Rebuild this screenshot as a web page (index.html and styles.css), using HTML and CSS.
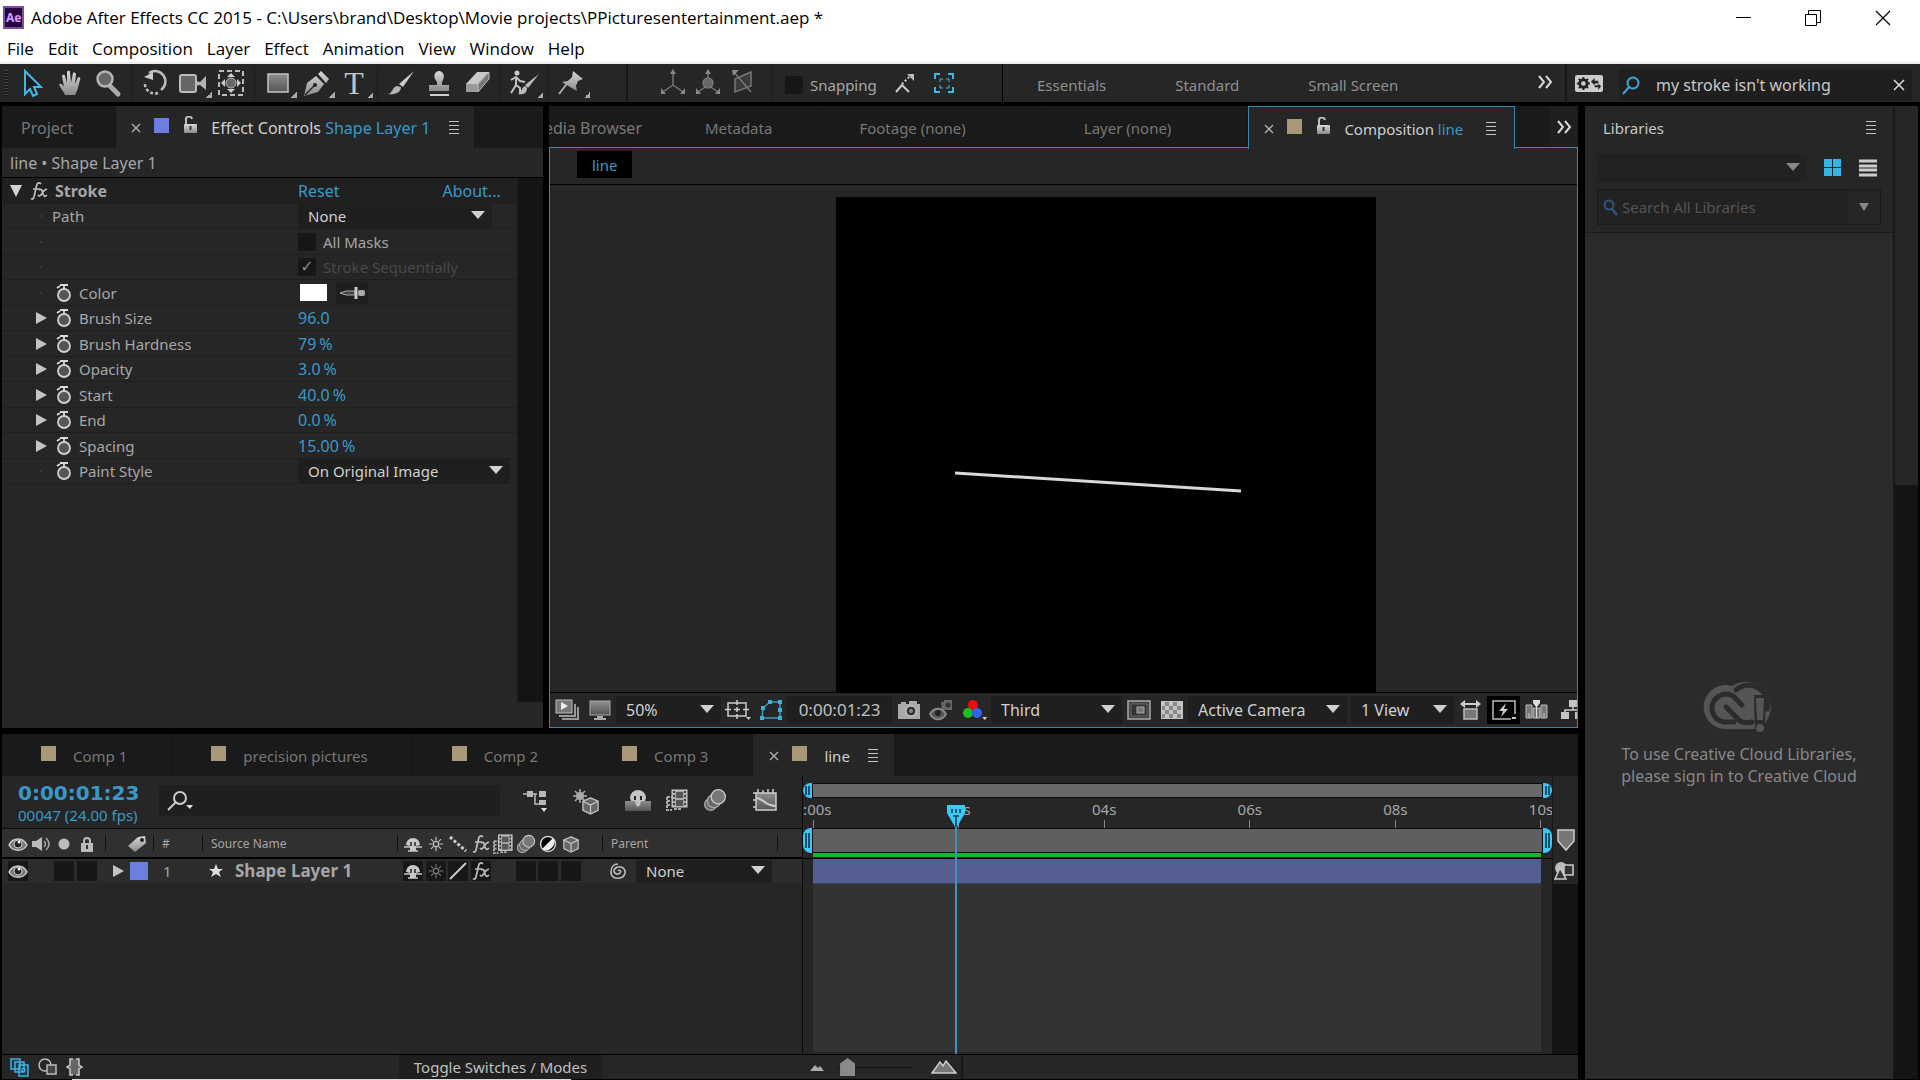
FILE: index.html
```html
<!DOCTYPE html>
<html lang="en">

<head>
  <meta charset="UTF-8" />
  <meta name="viewport" content="width=device-width, initial-scale=1.0" />
  <title>Adobe After Effects CC 2015</title>
  <link rel="stylesheet" href="styles.css">
</head>

<body>
  <!-- Shared icons -->
  <svg class="sprite" width="0" height="0">
    <linearGradient id="metal" x1="0" y1="0" x2="0" y2="1">
      <stop offset="0" stop-color="#d8d8d8" />
      <stop offset="1" stop-color="#8a8a8a" />
    </linearGradient>
    <linearGradient id="steel" x1="0" y1="0" x2="0" y2="1">
      <stop offset="0" stop-color="#8e8e8e" />
      <stop offset="1" stop-color="#555" />
    </linearGradient>
    <symbol id="i-menu" viewBox="0 0 12 13"><path d="M1 .5h10M1 4.500h10M1 8.500h10M1 12.500h10" stroke="#c4c4c4" stroke-width="1" /></symbol>
    <symbol id="i-close" viewBox="0 0 10 10"><path d="M1 1l8 8M9 1l-8 8" stroke="#b4b4b4" stroke-width="1.300" /></symbol>
    <symbol id="i-unlock" viewBox="0 0 16 18"><path d="M4 9V4a3 3 0 0 1 6-1" fill="none" stroke="#c0c0c0" stroke-width="2" /><rect x="2" y="8" width="13" height="9" rx="1" fill="url(#metal)" /><path d="M8.500 10v4" stroke="#333" stroke-width="2" /></symbol>
    <symbol id="i-more" viewBox="0 0 16 14"><path d="M2 1l5 6-5 6M9 1l5 6-5 6" fill="none" stroke="#d8d8d8" stroke-width="2" /></symbol>
    <symbol id="i-watch" viewBox="0 0 18 20"><circle cx="9" cy="12" r="6" fill="#555" stroke="#cfcfcf" stroke-width="1.800" /><path d="M5 2h8M9 2v4M2 5l3-2" stroke="#d8d8d8" stroke-width="1.800" /></symbol>
    <symbol id="i-fx" viewBox="0 0 20 20"><path d="M12 3c-2-2-4-1-4.500 2L5 16c-.5 2-2 2.500-3 1.500M4 8h7M10 9c3-2 3 1 4 4s2 3 4 1M18 8.500c-2-1-3 1-5 4s-3 3-4 1.500" fill="none" stroke="#bdbdbd" stroke-width="1.700" /></symbol>
    <symbol id="i-eye" viewBox="0 0 20 16"><path d="M1 9c4-8 14-8 18 0-4 7-14 7-18 0z" fill="#777" stroke="#c8c8c8" stroke-width="1.500" /><circle cx="10" cy="8" r="4" fill="#222" stroke="#ccc" /><circle cx="11" cy="6" r="1.500" fill="#fff" /></symbol>
    <symbol id="i-shy" viewBox="0 0 20 18"><path d="M3 10a7 7 0 0 1 14 0l-4 1v5H7v-5z" fill="#c8c8c8" /><path d="M1 12h6M13 12h6M5 16h10" stroke="#c8c8c8" stroke-width="1.500" /><path d="M8 7v4M12 7v4" stroke="#222" stroke-width="1.500" /></symbol>
    <symbol id="i-sun" viewBox="0 0 20 20"><circle cx="10" cy="10" r="3" fill="none" stroke="currentColor" stroke-width="1.500" /><path d="M10 2v4M10 14v4M2 10h4M14 10h4M4.500 4.500l2.500 2.500M13 13l2.500 2.500M15.500 4.500L13 7M7 13l-2.500 2.500" stroke="currentColor" stroke-width="1.300" /></symbol>
    <symbol id="i-cube" viewBox="0 0 20 20"><path d="M10 1.500l8 3.500v9.500l-8 4-8-4V5z" fill="#666" stroke="#c8c8c8" stroke-width="1.300" /><path d="M2 5l8 4 8-4M10 9v9" fill="none" stroke="#c8c8c8" stroke-width="1.300" /></symbol>
    <symbol id="i-blur" viewBox="0 0 22 22"><g fill="#666" stroke="#aaa" stroke-width="1.200"><circle cx="7" cy="15" r="5.500" /><circle cx="10" cy="12" r="6" /><circle cx="14" cy="8" r="6.500" fill="#777" stroke="#c8c8c8" /></g></symbol>
    <symbol id="i-film" viewBox="0 0 22 22"><path d="M1 8h6M1 8v13h5M1 12h3M1 16h3M8 20h7" stroke="#aaa" stroke-width="2" stroke-dasharray="3 1" fill="none" /><rect x="6" y="1" width="15" height="17" fill="#aaa" stroke="#ccc" /><path d="M10 3h7v6h-7zM10 11h7v6h-7z" fill="#555" /><path d="M8 2v15M19 2v15" stroke="#222" stroke-width="1.500" stroke-dasharray="2 2" /></symbol>
  </svg>

  <!-- Title bar -->
  <header class="titlebar">
    <svg class="app-icon" width="22" height="24" viewBox="0 0 22 24"><rect x="1" y="1" width="19" height="21" fill="#26043f" stroke="#7b4fa0" stroke-width="2" /><text x="3" y="16" font-size="12">Ae</text></svg>
    <h1>Adobe After Effects CC 2015 - C:\Users\brand\Desktop\Movie projects\PPicturesentertainment.aep *</h1>
    <div class="window-buttons">
      <button aria-label="Minimize"><svg width="16" height="16"><path d="M1 7.500h15" stroke="#000" /></svg></button>
      <button aria-label="Restore"><svg width="16" height="16" fill="none" stroke="#000"><path d="M.5 4.500h11v11H.5zM3.500 4V.500h12v12H12" /></svg></button>
      <button aria-label="Close"><svg width="16" height="16"><path d="M1 1l14 14M15 1L1 15" stroke="#000" stroke-width="1.200" /></svg></button>
    </div>
  </header>

  <nav class="menubar">
    <a href="#">File</a>
    <a href="#">Edit</a>
    <a href="#">Composition</a>
    <a href="#">Layer</a>
    <a href="#">Effect</a>
    <a href="#">Animation</a>
    <a href="#">View</a>
    <a href="#">Window</a>
    <a href="#">Help</a>
  </nav>

  <!-- Tools -->
  <div class="toolbar">
    <div class="tools">
      <span class="grip"></span>
      <div class="tool-group">
        <button aria-label="Selection"><svg width="28" height="30"><path d="M7 3v23l5-5 3 7 4-2-3-7h7z" fill="#1d1d1d" stroke="#3fb8e8" stroke-width="2" /></svg></button>
        <button aria-label="Hand"><svg width="28" height="30"><path d="M9 27c-2-5-5-7-6-11 2-1 4 1 5 3L6 8c1-2 3-1 3 0l2 7V4c1-2 3-1 3 0l1 11 2-10c1-1 3 0 3 1l-1 10 3-7c2 0 3 1 2 3-2 7-2 10-5 15z" fill="url(#metal)" /></svg></button>
        <button aria-label="Zoom"><svg width="28" height="30"><path d="M15 17l9 9" stroke="#aaa" stroke-width="5" stroke-linecap="round" /><circle cx="11" cy="11" r="7.500" fill="#666" stroke="#b4b4b4" stroke-width="2.500" /></svg></button>
      </div>
      <div class="tool-group">
        <button aria-label="Rotation"><svg width="28" height="30"><path d="M8 5a10 10 0 0 1 12 17" fill="none" stroke="#bbb" stroke-width="2.500" /><path d="M17 25A10 10 0 0 1 4 14" fill="none" stroke="#bbb" stroke-width="2.500" stroke-dasharray="3 2" /><path d="M3 9l9-5v8z" fill="#ccc" /></svg></button>
        <button aria-label="Camera" class="has-more"><svg width="30" height="30"><rect x="2" y="7" width="16" height="17" rx="2" fill="#666" stroke="#bbb" stroke-width="2" /><path d="M18 13l4 1 6-6v14l-6-5-4 1z" fill="#b4b4b4" /></svg></button>
        <button aria-label="Pan Behind"><svg width="28" height="30"><rect x="2" y="3" width="24" height="24" fill="none" stroke="#bbb" stroke-width="2" stroke-dasharray="5 3" /><circle cx="14" cy="15" r="5" fill="#666" stroke="#bbb" /><path d="M14 5l4 4h-8zM14 25l4-4h-8zM4 15l4-4v8zM24 15l-4-4v8z" fill="#ccc" /></svg></button>
      </div>
      <div class="tool-group">
        <button aria-label="Rectangle" class="has-more"><svg width="28" height="30"><rect x="4" y="6" width="20" height="18" fill="url(#steel)" stroke="#c4c4c4" stroke-width="1.500" /></svg></button>
        <button aria-label="Pen" class="has-more"><svg width="28" height="30"><path d="M2 28l3-13 9-7 8 8-6 8zM16 6l3-3 8 8-3 4z" fill="url(#metal)" /><path d="M3 27l9-9" stroke="#222" stroke-width="1.500" /><circle cx="13" cy="17" r="2" fill="#222" /></svg></button>
        <button aria-label="Type" class="has-more tool-type">T</button>
      </div>
      <div class="tool-group">
        <button aria-label="Brush"><svg width="28" height="30"><path d="M27 3L16 19l-4-3z" fill="#ccc" /><path d="M14 19c0 6-7 8-13 7 5-1 4-7 9-8z" fill="#b4b4b4" /></svg></button>
        <button aria-label="Clone Stamp"><svg width="28" height="30"><path d="M12 14c-5-6-2-11 2-11s7 5 3 11v3h7v6H4v-6h8z" fill="url(#metal)" /><path d="M5 27h19" stroke="#ccc" stroke-width="2" /></svg></button>
        <button aria-label="Eraser"><svg width="28" height="30"><path d="M3 16L14 4h12L15 16z" fill="#c8c8c8" /><path d="M3 16h12v8H3z" fill="#999" /><path d="M15 16L26 4v7L15 24z" fill="#777" stroke="#bbb" /></svg></button>
      </div>
      <div class="tool-group">
        <button aria-label="Roto Brush" class="has-more"><svg width="32" height="30"><circle cx="9" cy="5" r="2.500" fill="#ccc" /><path d="M3 12l5-3 4 4 5 1M8 9v8l4 3v6M8 17l-5 8" fill="none" stroke="#c0c0c0" stroke-width="2" /><path d="M31 6L20 20l-3-3zM19 20c0 6-5 7-9 6 4-2 3-6 7-8z" fill="#bbb" /></svg></button>
      </div>
      <div class="tool-group">
        <button aria-label="Puppet Pin" class="has-more"><svg width="28" height="30"><path d="M12 13L2 26" stroke="#aaa" stroke-width="2" /><path d="M16 3l10 8-5 2-2 5 1 5-7-4-8-5 6-1 4-4z" fill="url(#metal)" /></svg></button>
      </div>
    </div>

    <div class="axis">
      <button aria-label="Local Axis"><svg width="28" height="28" stroke="#777" stroke-width="1.500"><path d="M14 3v14M14 17L4 24M14 17l10 7" /><path d="M14 1l3 5h-6zM2 26v-6l5 6zM26 26v-6l-5 6z" fill="#888" stroke="none" /></svg></button>
      <button aria-label="World Axis"><svg width="28" height="28" stroke="#777" stroke-width="1.500"><path d="M14 3v14M14 17L4 24M14 17l10 7" /><circle cx="14" cy="15" r="5" fill="#666" /><path d="M14 1l3 5h-6zM2 26v-6l5 6zM26 26v-6l-5 6z" fill="#888" stroke="none" /></svg></button>
      <button aria-label="View Axis"><svg width="28" height="28" fill="none" stroke="#777" stroke-width="1.500"><path d="M6 11l16-7v14L6 24z" fill="#3a3a3a" /><path d="M5 4l17 20" /><path d="M3 2h7l-6 6z" fill="#888" stroke="none" /></svg></button>
    </div>
    <div class="snapping">
      <label><input type="checkbox"> Snapping</label>
      <button aria-label="Snap to edges"><svg width="24" height="24"><path d="M3 21l6-7 7 7" fill="none" stroke="#ccc" stroke-width="2" /><path d="M9 13l8-8" stroke="#ccc" stroke-width="2" stroke-dasharray="2 2" /><path d="M14 3h7v7z" fill="#bbb" /></svg></button>
      <button aria-label="Snap to features"><svg width="22" height="22" fill="none" stroke="#3fb8e8" stroke-width="2"><path d="M2 7V2h5M15 2h5v5M20 15v5h-5M7 20H2v-5" /><path d="M7 10V7h3M13 7h3v3M16 13v3h-3M10 16H7v-3" stroke-width="1" /></svg></button>
    </div>
    <div class="workspaces">
      <button>Essentials</button>
      <button>Standard</button>
      <button>Small Screen</button>
    </div>
    <button class="more" aria-label="More workspaces"><svg width="16" height="14"><use href="#i-more" /></svg></button>
    <div class="help">
      <button aria-label="Sync settings"><svg width="28" height="17" viewBox="0 0 30 18"><rect width="30" height="18" rx="2" fill="#ccc" /><circle cx="9" cy="9" r="4" fill="none" stroke="#222" stroke-width="3" /><path d="M9 2v3M9 13v3M2 9h3M13 9h3M4 4l2 2M14 4l-2 2M4 14l2-2M14 14l-2-2" stroke="#222" stroke-width="2" /><path d="M17 7l4-4v3h4v3h-4v2zM28 12l-3 4v-3h-4v-2h4V9z" fill="#222" /></svg></button>
      <div class="help-search">
        <svg width="20" height="20"><circle cx="12" cy="8" r="5.500" fill="none" stroke="#3fa8dc" stroke-width="2" /><path d="M8 12l-6 7" stroke="#3fa8dc" stroke-width="2" /></svg>
        <input type="text" value="my stroke isn't working" aria-label="Search Help">
        <button aria-label="Clear search"><svg width="14" height="14"><path d="M2 2l10 10M12 2L2 12" stroke="#ddd" stroke-width="1.500" /></svg></button>
      </div>
    </div>
  </div>

  <main class="workspace">
    <!-- Effect Controls -->
    <section class="panel effects">
      <div class="tabs">
        <button class="tab">Project</button>
        <div class="tab active">
          <button class="x" aria-label="Close tab"><svg width="10" height="10"><use href="#i-close" /></svg></button>
          <i class="swatch blue"></i>
          <svg class="lock" width="16" height="18"><use href="#i-unlock" /></svg>
          <span>Effect Controls <b>Shape Layer 1</b></span>
          <button class="burger" aria-label="Panel menu"><svg width="12" height="13"><use href="#i-menu" /></svg></button>
        </div>
      </div>
      <p class="effects-path">line • Shape Layer 1</p>
      <div class="effects-body">
        <div class="props">
          <div class="prop head">
            <div class="name"><i class="twirl open"></i><svg width="20" height="20"><use href="#i-fx" /></svg><strong>Stroke</strong></div>
            <div class="value"><a href="#">Reset</a><a href="#" class="about">About...</a></div>
          </div>
          <div class="prop">
            <div class="name"><i class="dot"></i><label for="path">Path</label></div>
            <div class="value"><span class="select path-select"><select id="path"><option>None</option></select></span></div>
          </div>
          <div class="prop">
            <div class="name"><i class="dot"></i></div>
            <div class="value"><label><input type="checkbox"> All Masks</label></div>
          </div>
          <div class="prop">
            <div class="name"><i class="dot"></i></div>
            <div class="value"><label class="off"><input type="checkbox" checked disabled> Stroke Sequentially</label></div>
          </div>
          <div class="prop">
            <div class="name"><i class="dot"></i><svg width="18" height="20"><use href="#i-watch" /></svg>Color</div>
            <div class="value"><button class="color-box" aria-label="Color"></button><button class="dropper" aria-label="Eyedropper"><svg width="26" height="14"><path d="M1 7l6-2h9v4H7z" fill="#444" stroke="#aaa" /><path d="M17 1v12" stroke="#ccc" stroke-width="3" /><rect x="19" y="4" width="7" height="6" rx="2" fill="#aaa" /></svg></button></div>
          </div>
          <div class="prop">
            <div class="name"><i class="twirl"></i><svg width="18" height="20"><use href="#i-watch" /></svg>Brush Size</div>
            <div class="value"><a href="#">96.0</a></div>
          </div>
          <div class="prop">
            <div class="name"><i class="twirl"></i><svg width="18" height="20"><use href="#i-watch" /></svg>Brush Hardness</div>
            <div class="value"><a href="#">79</a><span class="unit">%</span></div>
          </div>
          <div class="prop">
            <div class="name"><i class="twirl"></i><svg width="18" height="20"><use href="#i-watch" /></svg>Opacity</div>
            <div class="value"><a href="#">3.0</a><span class="unit">%</span></div>
          </div>
          <div class="prop">
            <div class="name"><i class="twirl"></i><svg width="18" height="20"><use href="#i-watch" /></svg>Start</div>
            <div class="value"><a href="#">40.0</a><span class="unit">%</span></div>
          </div>
          <div class="prop">
            <div class="name"><i class="twirl"></i><svg width="18" height="20"><use href="#i-watch" /></svg>End</div>
            <div class="value"><a href="#">0.0</a><span class="unit">%</span></div>
          </div>
          <div class="prop">
            <div class="name"><i class="twirl"></i><svg width="18" height="20"><use href="#i-watch" /></svg>Spacing</div>
            <div class="value"><a href="#">15.00</a><span class="unit">%</span></div>
          </div>
          <div class="prop">
            <div class="name"><i class="dot"></i><svg width="18" height="20"><use href="#i-watch" /></svg><label for="paint">Paint Style</label></div>
            <div class="value"><span class="select paint-select"><select id="paint"><option>On Original Image</option></select></span></div>
          </div>
        </div>
        <div class="scrollbar"></div>
      </div>
    </section>

    <!-- Composition viewer -->
    <section class="panel viewer">
      <div class="tabs">
        <button class="tab clipped"><span>Media Browser</span></button>
        <button class="tab">Metadata</button>
        <button class="tab wide">Footage (none)</button>
        <button class="tab wide">Layer (none)</button>
        <div class="tab active">
          <button class="x" aria-label="Close tab"><svg width="10" height="10"><use href="#i-close" /></svg></button>
          <i class="swatch"></i>
          <svg class="lock" width="16" height="18"><use href="#i-unlock" /></svg>
          <span>Composition <b>line</b></span>
          <button class="burger" aria-label="Panel menu"><svg width="12" height="13"><use href="#i-menu" /></svg></button>
        </div>
        <button class="tab-more" aria-label="More tabs"><svg width="16" height="14"><use href="#i-more" /></svg></button>
      </div>
      <div class="viewer-body">
        <div class="crumbs"><button>line</button></div>
        <div class="stage">
          <svg class="frame" viewBox="0 0 540 495" preserveAspectRatio="xMidYMin slice"><rect width="540" height="495" fill="#000" /><path d="M119 276l286 18" stroke="#d8d8d8" stroke-width="3" /></svg>
        </div>
        <div class="controls">
          <button aria-label="Always Preview"><svg width="24" height="22"><path d="M7 20h16V8M4 17h16V5" fill="none" stroke="#999" stroke-width="2" /><rect x="1" y="1" width="16" height="13" fill="#777" stroke="#bbb" /><path d="M6 3l7 4-7 4z" fill="#eee" /></svg></button>
          <button aria-label="Primary Viewer"><svg width="24" height="22"><rect x="2" y="2" width="20" height="14" fill="url(#steel)" stroke="#aaa" /><path d="M9 17h6v2H9zM6 19h12v2H6z" fill="#aaa" /></svg></button>
          <span class="select zoom-select"><select aria-label="Magnification"><option>50%</option></select></span>
          <button aria-label="Grid and guides"><svg width="26" height="22" fill="none" stroke="#ccc" stroke-width="1.500"><rect x="3" y="4" width="18" height="13" /><path d="M12 1v5M12 15v5M0 10.500h6M18 10.500h6M9 10.500h6M12 8v5" /><path d="M21 18h5l-2.500 3z" fill="#ccc" stroke="none" /></svg></button>
          <button aria-label="Mask visibility"><svg width="24" height="22"><path d="M3 19l1-10 7-6h10v16z" fill="none" stroke="#3a9cc4" stroke-width="1.500" /><path d="M1 17h4v4H1zM2 7h4v4H2zM9 1h4v4H9zM19 1h4v4h-4zM19 9h4v4h-4zM19 17h4v4h-4z" fill="#3fb0dc" /></svg></button>
          <button class="timecode">0:00:01:23</button>
          <button aria-label="Snapshot"><svg width="24" height="20"><path d="M1 4h3V2h5v2h3V1h8v3h3v15H1z" fill="#aaa" /><circle cx="14" cy="11" r="5" fill="#333" stroke="#ddd" /><circle cx="14" cy="11" r="2" fill="#888" /></svg></button>
          <button aria-label="Show Snapshot"><svg width="26" height="22"><path d="M12 3h3V1h8v10H13z" fill="#666" /><circle cx="19" cy="6" r="2.500" fill="#333" /><path d="M1 15c4-7 12-7 16 0-4 7-12 7-16 0z" fill="#555" stroke="#888" stroke-width="2" /><circle cx="9" cy="14" r="3" fill="#222" /></svg></button>
          <button aria-label="Channels"><svg width="26" height="22"><circle cx="11" cy="6" r="5" fill="#f40808" /><circle cx="6" cy="14" r="5" fill="#1cc01c" /><circle cx="15" cy="14" r="5" fill="#2f62ee" /><path d="M20 18h5l-2 3z" fill="#ccc" /></svg></button>
          <span class="select res-select"><select aria-label="Resolution"><option>Third</option></select></span>
          <button aria-label="Region of Interest"><svg width="24" height="20"><rect x="1" y="1" width="22" height="18" fill="#444" stroke="#aaa" stroke-width="1.500" /><rect x="4" y="4" width="16" height="12" fill="#333" stroke="#666" /><rect x="10" y="7" width="7" height="6" fill="#777" stroke="#aaa" /></svg></button>
          <button aria-label="Transparency Grid"><svg width="24" height="20"><rect x="1" y="1" width="22" height="18" fill="#c4c4c4" /><path d="M5 2h4v4H5zM13 2h4v4h-4zM2 6h3v4H2zM9 6h4v4H9zM17 6h4v4h-4zM5 10h4v4H5zM13 10h4v4h-4zM2 14h3v4H2zM9 14h4v4H9zM17 14h4v4h-4z" fill="#888" /></svg></button>
          <span class="select cam-select"><select aria-label="3D View"><option>Active Camera</option></select></span>
          <span class="select view-select"><select aria-label="View layout"><option>1 View</option></select></span>
          <button aria-label="Pixel Aspect Ratio"><svg width="24" height="22"><path d="M4 5h15" stroke="#ccc" stroke-width="2" /><path d="M1 5l5-4v8zM22 5l-5-4v8z" fill="#ccc" /><rect x="5" y="10" width="13" height="10" fill="#777" stroke="#bbb" stroke-width="1.500" /></svg></button>
          <button class="on" aria-label="Fast Previews"><svg width="26" height="22"><path d="M20 20H2V2h22v13" fill="none" stroke="#bbb" stroke-width="1.500" /><path d="M15 4l-7 8h4l-2 6 7-8h-4z" fill="#ccc" /><path d="M21 18h4v2h-4z" fill="#ccc" /></svg></button>
          <button aria-label="Timeline"><svg width="24" height="22"><path d="M1 6h6v13H1zM8 9h7v10H8zM16 6h6v13h-6z" fill="#777" stroke="#bbb" /><path d="M4 14v5M19 14v5" stroke="#ccc" /><path d="M8 1h7v3l-3 4v11h-1V8L8 4z" fill="#ddd" /></svg></button>
          <button aria-label="Flowchart"><svg width="20" height="22"><path d="M9 1h8v7H9zM1 13h8v7H1zM15 13h8v7h-8z" fill="#c4c4c4" /><path d="M13 8v3M5 13v-2h15" fill="none" stroke="#ccc" stroke-width="1.500" /></svg></button>
        </div>
      </div>
    </section>

    <!-- Libraries -->
    <aside class="panel libraries">
      <div class="lib-main">
        <div class="lib-head"><h2>Libraries</h2><button class="burger" aria-label="Panel menu"><svg width="12" height="13"><use href="#i-menu" /></svg></button></div>
        <div class="lib-row">
          <span class="select lib-select"><select aria-label="Library"><option></option></select></span>
          <button aria-label="Show as icons"><svg width="18" height="18"><path d="M0 0h8v8H0zM9 0h8v8H9zM0 9h8v8H0zM9 9h8v8H9z" fill="#35b4e8" /></svg></button>
          <button aria-label="Show as list"><svg width="18" height="18"><path d="M0 2h18M0 7h18M0 11h18M0 16h18" stroke="#ccc" stroke-width="3" /></svg></button>
        </div>
        <div class="lib-search">
          <svg width="16" height="18"><circle cx="6" cy="7" r="4.500" fill="none" stroke="#2e5384" stroke-width="2" /><path d="M9 11l5 6" stroke="#2e5384" stroke-width="2.500" /></svg>
          <input type="text" placeholder="Search All Libraries" aria-label="Search All Libraries">
          <button aria-label="Search scope"><i class="caret"></i></button>
        </div>
        <div class="lib-empty">
          <svg width="74" height="56" viewBox="0 0 74 56">
            <path d="M22 51a22 22 0 1 1 8-43A25 25 0 0 1 65 42L60 51z" fill="#555" />
            <g fill="none" stroke="#2b2b2b" stroke-width="5" stroke-linecap="round">
              <path d="M40 27L31 18a14 14 0 1 0-9 26H32" />
              <path d="M24 29l14 14q5 3 12 1" />
              <path d="M34 12A19 19 0 0 1 65 31" />
            </g>
            <path d="M52 17h12l-1 28 2 9H53z" fill="#2b2b2b" />
            <path d="M54 20h8l-1 22h-6z" fill="#555" />
            <circle cx="58" cy="50" r="4" fill="#555" />
          </svg>
          <p>To use Creative Cloud Libraries,<br>please sign in to Creative Cloud</p>
        </div>
      </div>
      <div class="lib-scroll"><i></i></div>
    </aside>

    <!-- Timeline -->
    <section class="panel timeline">
      <div class="tabs">
        <button class="tab"><i class="swatch"></i>Comp 1</button>
        <button class="tab"><i class="swatch"></i>precision pictures</button>
        <button class="tab"><i class="swatch"></i>Comp 2</button>
        <button class="tab"><i class="swatch"></i>Comp 3</button>
        <div class="tab active">
          <button class="x" aria-label="Close tab"><svg width="10" height="10"><use href="#i-close" /></svg></button>
          <i class="swatch"></i>
          <span>line</span>
          <button class="burger" aria-label="Panel menu"><svg width="12" height="13"><use href="#i-menu" /></svg></button>
        </div>
      </div>

      <div class="timeline-body">
        <div class="layers">
          <div class="layers-top">
            <div class="current-time"><strong>0:00:01:23</strong><span>00047 (24.00 fps)</span></div>
            <label class="layer-search">
              <svg width="28" height="22"><circle cx="14" cy="8" r="6" fill="none" stroke="#ccc" stroke-width="2" /><path d="M10 12l-8 8" stroke="#ccc" stroke-width="2" /><path d="M20 15h7l-3 4z" fill="#ddd" /></svg>
              <input type="text" aria-label="Search layers">
            </label>
            <div class="layer-tools">
              <button aria-label="Mini-Flowchart"><svg width="24" height="24"><path d="M0 6h14M12 6v10h4" fill="none" stroke="#bbb" stroke-width="1.500" /><path d="M4 3h6v6H4zM16 3h7v6h-7zM16 12h7v5h-7z" fill="#b8b8b8" /><path d="M18 20h6l-3 4z" fill="#ddd" /></svg></button>
              <button aria-label="Draft 3D"><svg width="28" height="28"><path d="M8 1v14M1 8h14M3 3l10 10M13 3L3 13" stroke="#aaa" stroke-width="1.500" /><circle cx="8" cy="8" r="4" fill="#aaa" /><svg x="9" y="8" width="19" height="20"><use href="#i-cube" /></svg></svg></button>
              <div class="layer-toggles">
                <button aria-label="Hide Shy Layers"><svg width="26" height="24"><rect y="13" width="26" height="10" fill="url(#steel)" /><path d="M5 10a8 8 0 0 1 16 0l-1 3h-4l-1 4-2 2-2-2-1-4H6z" fill="#c4c4c4" /><path d="M10 8v4M16 8v4" stroke="#222" stroke-width="2" /></svg></button>
                <button aria-label="Frame Blending"><svg width="22" height="22"><use href="#i-film" /></svg></button>
                <button aria-label="Motion Blur"><svg width="24" height="24"><use href="#i-blur" /></svg></button>
              </div>
              <button aria-label="Graph Editor"><svg width="26" height="24"><rect x="4" y="5" width="20" height="17" fill="url(#steel)" stroke="#ccc" stroke-width="1.500" /><path d="M1 5h3M1 12h3M1 19h3M6 5V1M11 5V2M16 5V1M21 5V1" stroke="#ccc" stroke-width="1.500" /><path d="M4 10c8 0 8 8 20 8" fill="none" stroke="#ccc" stroke-width="2" /></svg></button>
            </div>
          </div>
          <table class="layer-table">
            <colgroup>
              <col class="c-av"><col class="c-label"><col class="c-num"><col class="c-name"><col class="c-switch"><col class="c-parent"><col>
            </colgroup>
            <thead>
              <tr>
                <th>
                  <div class="av">
                    <svg width="20" height="16"><use href="#i-eye" /></svg>
                    <svg width="20" height="16"><path d="M1 5h4l6-4v14l-6-4H1z" fill="#bbb" /><path d="M13 5q3 3 0 6M15 2q6 6 0 12" fill="none" stroke="#aaa" stroke-width="1.500" /></svg>
                    <svg width="12" height="12"><circle cx="6" cy="6" r="5.500" fill="#bbb" /></svg>
                    <svg width="14" height="17"><path d="M4 8V5a3 3 0 0 1 6 0v3" fill="none" stroke="#bbb" stroke-width="2" /><rect x="1" y="7" width="12" height="9" fill="#bbb" /><path d="M7 9v4" stroke="#333" stroke-width="2" /></svg>
                  </div>
                </th>
                <th><svg class="tag" width="20" height="18"><path d="M1 11L11 2l7-1 1 7-11 9z" fill="url(#metal)" /><circle cx="15" cy="5" r="2" fill="#222" /></svg></th>
                <th>#</th>
                <th>Source Name</th>
                <th>
                  <div class="switches">
                    <svg width="20" height="18"><use href="#i-shy" /></svg>
                    <svg width="18" height="18"><use href="#i-sun" /></svg>
                    <svg width="18" height="18"><path d="M1 2l16 14" stroke="#ccc" stroke-width="3" stroke-dasharray="3 2" /></svg>
                    <svg width="20" height="20"><use href="#i-fx" /></svg>
                    <svg width="20" height="20"><use href="#i-film" /></svg>
                    <svg width="20" height="20"><use href="#i-blur" /></svg>
                    <svg width="18" height="18"><circle cx="9" cy="9" r="7.500" fill="#000" stroke="#ccc" stroke-width="1.500" /><path d="M14 3a8 8 0 0 1-11 11z" fill="#eee" /></svg>
                    <svg width="18" height="19"><use href="#i-cube" /></svg>
                  </div>
                </th>
                <th>Parent</th>
                <th></th>
              </tr>
            </thead>
            <tbody>
              <tr>
                <td>
                  <div class="av">
                    <button class="cell" aria-label="Video"><svg width="20" height="16"><use href="#i-eye" /></svg></button>
                    <span></span>
                    <button class="cell" aria-label="Solo"></button>
                    <button class="cell" aria-label="Lock"></button>
                  </div>
                </td>
                <td><div class="label-cell"><i class="twirl"></i><i class="swatch blue"></i></div></td>
                <td class="num">1</td>
                <td><div class="layer-name"><svg width="16" height="16"><path d="M8 1l2 5h5l-4 3 2 5-5-3-5 3 2-5-4-3h5z" fill="#ddd" /></svg>Shape Layer 1</div></td>
                <td>
                  <div class="switches">
                    <button class="cell" aria-label="Shy"><svg width="20" height="18"><use href="#i-shy" /></svg></button>
                    <button class="cell dim" aria-label="Collapse"><svg width="18" height="18"><use href="#i-sun" /></svg></button>
                    <button class="cell" aria-label="Quality"><svg width="18" height="18"><path d="M1 17L17 1" stroke="#ccc" stroke-width="2" /></svg></button>
                    <button class="cell" aria-label="Effects"><svg width="20" height="20"><use href="#i-fx" /></svg></button>
                    <span></span>
                    <button class="cell" aria-label="Motion blur"></button>
                    <button class="cell" aria-label="Adjustment layer"></button>
                    <button class="cell" aria-label="3D layer"></button>
                  </div>
                </td>
                <td>
                  <div class="parent">
                    <svg width="18" height="18"><path d="M9 9c1-2 4 0 2 2s-6 1-6-2 5-6 9-3 2 9-3 10-9-1-9-6 3-8 7-8" fill="none" stroke="#bbb" stroke-width="1.600" /></svg>
                    <span class="select parent-select"><select aria-label="Parent"><option>None</option></select></span>
                  </div>
                </td>
                <td></td>
              </tr>
            </tbody>
          </table>
        </div>

        <div class="time">
          <div class="navigator"><i class="handle"></i><div class="bar"></div><i class="handle end"></i></div>
          <div class="ruler"><span>0:00s</span><span>02s</span><span>04s</span><span>06s</span><span>08s</span><span>10s</span></div>
          <div class="work-area"><i class="handle"></i><div class="bar"></div><i class="handle end"></i></div>
          <div class="cache"><i></i></div>
          <div class="tracks"><div class="lane"><div class="layer-bar"></div></div></div>
          <div class="playhead-area">
            <div class="playhead" style="left: 19.6%"><svg width="18" height="22"><path d="M0 0h18v8l-8 14H8L0 8z" fill="#3dc8fa" /><path d="M5 4v4M9 4v4M13 4v4M6 11h6M9 11v11" stroke="#0b3b50" stroke-width="1.500" /></svg></div>
          </div>
        </div>

        <div class="time-side">
          <svg class="marker" width="20" height="24"><path d="M2 2h16v11l-8 9-8-9z" fill="#777" stroke="#ccc" stroke-width="1.500" /></svg>
          <svg class="comp-button" width="22" height="22"><circle cx="8" cy="9" r="6" fill="#bbb" /><rect x="11" y="6" width="9" height="10" fill="#333" stroke="#ccc" stroke-width="1.500" /><path d="M7 9l6 11H2z" fill="#333" stroke="#ccc" stroke-width="1.500" /></svg>
          <div class="scrollbar"></div>
        </div>
      </div>

      <div class="timeline-foot">
        <div class="foot-left">
          <button aria-label="Layer Switches pane"><svg width="20" height="20" fill="#1f3a46" stroke="#3fb0dc" stroke-width="1.500"><path d="M1 2h9v10H1zM5 5h9v10H5zM9 8h9v11H9z" /><circle cx="13.500" cy="13" r="1.500" /></svg></button>
          <button aria-label="Transfer Controls pane"><svg width="20" height="20" fill="none" stroke="#bbb" stroke-width="1.500"><circle cx="7" cy="8" r="6" /><rect x="9" y="8" width="9" height="9" fill="#444" /></svg></button>
          <button aria-label="In/Out pane"><svg width="18" height="20" stroke="#ccc" stroke-width="1.500"><path d="M4 2h9v6l2 2-2 2v6H4v-6l-2-2 2-2z" fill="#666" stroke="none" /><path d="M7 2H4v6l-3 2 3 2v6h3M10 2h3v6l3 2-3 2v6h-3" fill="none" /></svg></button>
        </div>
        <button class="toggle">Toggle Switches / Modes</button>
        <div class="zoomer">
          <svg width="16" height="12"><path d="M1 10l5-6 3 3 2-2 4 5z" fill="#aaa" /></svg>
          <input type="range" min="0" max="100" value="5" aria-label="Timeline zoom">
          <svg width="26" height="16"><path d="M1 14l8-11 3 4 3-5 10 12z" fill="#777" stroke="#ccc" stroke-width="1.500" /></svg>
        </div>
      </div>
    </section>
  </main>
  <div class="taskbar"><i></i></div>
</body>

</html>
```
FILE: styles.css
```css
* {
  box-sizing: border-box;
  margin: 0;
  padding: 0;
}

body {
  display: flex;
  flex-direction: column;
  min-height: 100vh;
  background-color: #000;
  color: #a6a6a6;
  font-family: "Noto Sans", "Open Sans", sans-serif;
  font-size: 15px;
  line-height: 20px;
}

button,
input,
select {
  font: inherit;
  color: inherit;
  background: none;
  border: none;
  outline: none;
}

button {
  display: flex;
  align-items: center;
  justify-content: center;
}

a {
  color: inherit;
  text-decoration: none;
}

svg {
  display: block;
  flex: none;
}

.sprite {
  position: absolute;
}

/* Title bar and menu */
.titlebar {
  display: flex;
  align-items: center;
  height: 35px;
  padding: 0 2px 0 3px;
  background-color: #fff;
  color: #000;
}

.titlebar h1 {
  flex: 1;
  margin-left: 6px;
  font-family: "Open Sans", sans-serif;
  font-size: 17px;
  font-weight: normal;
}

.app-icon text {
  fill: #d6a0ff;
  font-weight: bold;
}

.window-buttons {
  display: flex;
}

.window-buttons button {
  width: 70px;
  height: 34px;
}

.menubar {
  display: flex;
  gap: 14px;
  height: 29px;
  padding: 4px 7px;
  background-color: #fff;
  border-bottom: 2px solid #eee;
  color: #000;
  font-family: "Open Sans", sans-serif;
  font-size: 17px;
}

/* Toolbar */
.toolbar {
  display: flex;
  height: 38px;
  background-color: #262626;
}

.tools {
  display: flex;
  align-items: center;
  width: 628px;
  border-right: 2px solid #161616;
}

.grip {
  width: 4px;
  height: 26px;
  margin: 0 5px 0 4px;
  background: repeating-linear-gradient(#444 0 1px, #1c1c1c 1px 3px);
}

.tool-group {
  display: flex;
}

.tool-group + .tool-group {
  margin-left: 4px;
  padding-left: 4px;
  border-left: 1px solid #1c1c1c;
}

.tool-group button {
  width: 38px;
  height: 36px;
}

.has-more {
  background: linear-gradient(135deg, transparent 50%, #aaa 50%) no-repeat 32px 27px / 6px 6px;
}

.tool-type {
  color: #c4c4c4;
  font-family: "Liberation Serif", serif;
  font-size: 32px;
}

.axis {
  display: flex;
  align-items: center;
  gap: 7px;
  padding: 0 15px 2px 31px;
  border-right: 1px solid #1c1c1c;
}

.snapping {
  display: flex;
  align-items: center;
  gap: 16px;
  width: 230px;
  padding-left: 12px;
  border-right: 1px solid #000;
}

label {
  display: flex;
  align-items: center;
}

.snapping label,
.workspaces {
  padding-top: 4px;
}

input[type="checkbox"] {
  appearance: none;
  width: 18px;
  height: 18px;
  margin-right: 7px;
  background-color: #171717;
}

input[type="checkbox"]:checked::after {
  content: "✓";
  display: block;
  color: #8a8a8a;
  font-family: "DejaVu Sans", sans-serif;
  font-size: 16px;
  line-height: 18px;
  text-align: center;
}

.workspaces {
  display: flex;
  flex: 1;
  gap: 69px;
  padding-left: 34px;
  color: #8f8f8f;
}

.more {
  width: 38px;
  padding-bottom: 2px;
  margin-right: 1px;
}

.help {
  display: flex;
  align-items: center;
  gap: 16px;
  width: 355px;
  padding: 0 8px;
  border-left: 2px solid #161616;
}

.help-search {
  display: flex;
  flex: 1;
  align-items: center;
  height: 30px;
  padding: 0 6px 0 2px;
  margin-top: 4px;
  background-color: #1f1f1f;
  color: #c8c8c8;
  font-size: 16px;
}

.help-search input {
  flex: 1;
  min-width: 0;
  padding-left: 15px;
}

/* Workspace */
.workspace {
  display: grid;
  flex: 1;
  grid-template-columns: 541px 1fr 334px;
  grid-template-rows: 1fr 345px;
  gap: 6px;
  padding: 4px 2px 0;
}

.panel {
  display: flex;
  flex-direction: column;
  min-width: 0;
  background-color: #262626;
}

.libraries {
  grid-column: 3;
  grid-row: 1 / 3;
  margin-left: 1px;
}

.timeline {
  grid-column: 1 / 3;
  grid-row: 2;
}

/* Tabs */
.tabs {
  display: flex;
  height: 42px;
  background-color: #1a1a1a;
  color: #777;
}

.tab {
  display: flex;
  align-items: center;
  padding: 1px 45px 0 19px;
  border-right: 1px solid #161616;
  white-space: nowrap;
}

.tab.active {
  padding: 1px 17px 0 15px;
  background-color: #262626;
  color: #d0d0d0;
}

.tab b {
  color: #3a98c9;
  font-weight: normal;
}

.tab .lock {
  margin: 0 13px 6px;
}

.swatch {
  width: 15px;
  height: 15px;
  margin-bottom: 4px;
  background-color: #a89878;
}

.swatch.blue {
  background-color: #6b7fe0;
}

.x {
  margin-right: 13px;
}

.burger {
  margin-left: 20px;
}

/* Drop-downs */
.select {
  position: relative;
  display: flex;
  background-color: #1f1f1f;
  color: #d0d0d0;
}

.select select {
  appearance: none;
  width: 100%;
  padding-left: 10px;
}

.select::after,
.caret {
  content: "";
  border: 7px solid transparent;
  border-top: 8px solid #d0d0d0;
  border-bottom: none;
}

.select::after {
  position: absolute;
  top: 50%;
  right: 7px;
  margin-top: -5px;
  pointer-events: none;
}

.select select option {
  background-color: #1f1f1f;
}

/* Effect controls */
.effects .tab {
  font-size: 16px;
}

.effects .tab:first-child {
  padding-right: 42px;
}

.effects .tab.active {
  padding-right: 14px;
}

.effects .burger {
  margin-left: 18px;
}

.effects-path {
  height: 30px;
  padding: 5px 8px;
  border-bottom: 1px solid #000;
  font-size: 16px;
}

.effects-body {
  display: flex;
  flex: 1;
}

.props {
  flex: 1;
}

.prop {
  display: flex;
  height: 26px;
  border-bottom: 1px solid #1f1f1f;
}

.prop:nth-child(even) {
  height: 25px;
}

.prop.head {
  background-color: #202020;
  font-size: 16px;
}

.name {
  display: flex;
  align-items: center;
  width: 296px;
  padding-left: 34px;
}

.name svg {
  margin-right: 6px;
}

.head .name {
  padding-left: 8px;
}

.head .name svg {
  margin-left: 5px;
}

.twirl {
  border: 6px solid transparent;
  border-left: 11px solid #c4c4c4;
  border-right: none;
  margin-right: 8px;
}

.twirl.open {
  border: 6px solid transparent;
  border-top: 12px solid #d0d0d0;
  border-bottom: none;
  margin-right: 2px;
}

.dot {
  width: 2px;
  height: 2px;
  margin: 0 10px 0 4px;
  background-color: #3a3a3a;
}

.dot + svg {
  margin-left: 3px;
}

.value {
  display: flex;
  flex: 1;
  align-items: center;
}

.value a,
.unit {
  color: #3a98c9;
  font-size: 16px;
}

.unit {
  margin-left: 3px;
}

.value .about {
  margin-left: 103px;
}

.value .off {
  color: #484848;
}

.value .select {
  height: 24px;
}

.path-select {
  width: 194px;
}

.paint-select {
  width: 212px;
}

.color-box {
  width: 27px;
  height: 17px;
  margin-left: 2px;
  background-color: #fff;
}

.dropper {
  width: 32px;
  height: 22px;
  margin-left: 9px;
  background-color: #1f1f1f;
}

.effects .scrollbar {
  width: 26px;
  margin-bottom: 26px;
  background-color: #141414;
  border-left: 1px solid #1c1c1c;
}

/* Viewer */
.viewer .tab.clipped {
  justify-content: flex-end;
  width: 137px;
  padding: 1px 43px 0 0;
  font-size: 16px;
  overflow: hidden;
}

.viewer .tab.wide {
  padding: 1px 76px 0 41px;
}

.viewer .tab.active {
  border: 1px solid #3f86ac;
  border-bottom: none;
  margin-bottom: -1px;
  z-index: 1;
}

.viewer .burger {
  margin-left: 22px;
}

.tab-more {
  width: 28px;
  margin-left: auto;
  background-color: #1f1f1f;
}

.viewer-body {
  display: flex;
  flex: 1;
  flex-direction: column;
  border: 1px solid #3f86ac;
  margin-top: -1px;
}

.crumbs {
  padding: 3px 27px 6px;
  border-bottom: 1px solid #000;
}

.crumbs button {
  height: 27px;
  padding: 0 15px;
  background-color: #000;
  color: #3a98c9;
}

.stage {
  display: flex;
  flex: 1;
  min-height: 0;
  padding: 12px 0 0 27.8%;
}

.frame {
  width: 540px;
  height: 495px;
}

.controls {
  display: flex;
  align-items: center;
  height: 35px;
  border-top: 1px solid #000;
  font-size: 16px;
  overflow: hidden;
}

.controls button {
  flex: none;
  width: 33px;
  height: 28px;
}

.controls .on {
  background-color: #000;
}

.controls .select {
  flex: none;
  height: 28px;
}

.controls .timecode {
  width: 105px;
  background-color: #1f1f1f;
  color: #c0c0c0;
  font-size: 17px;
}

.zoom-select {
  width: 105px;
}

.res-select {
  width: 131px;
}

.cam-select {
  width: 159px;
  margin-right: 4px;
}

.view-select {
  width: 103px;
}

/* Libraries */
.panel.libraries {
  flex-direction: row;
}

.lib-main {
  display: flex;
  flex: 1;
  flex-direction: column;
  min-width: 0;
}

.lib-head {
  display: flex;
  align-items: center;
  height: 42px;
  padding: 1px 16px 0 18px;
}

.lib-head h2 {
  flex: 1;
  color: #c8c8c8;
  font-size: 15px;
  font-weight: normal;
}

.lib-row {
  display: flex;
  align-items: center;
  gap: 17px;
  padding: 6px 16px 0 12px;
}

.lib-select {
  flex: 1;
  min-width: 0;
  height: 28px;
  background-color: #222;
}

.lib-select::after {
  border-top-color: #888;
}

.lib-search {
  display: flex;
  align-items: center;
  height: 36px;
  margin: 7px 12px 7px;
  padding-left: 5px;
  border: 1px solid #1a1a1a;
  background-color: #222;
}

.lib-search input {
  flex: 1;
  min-width: 0;
  padding-left: 3px;
}

.lib-search input::placeholder {
  color: #555;
}

.lib-search button {
  width: 32px;
  height: 34px;
  background-color: #262626;
}

.caret {
  border-width: 8px 5px 0;
  border-top-color: #888;
}

.lib-empty {
  display: flex;
  flex: 1;
  flex-direction: column;
  align-items: center;
  justify-content: center;
  gap: 9px;
  padding-top: 152px;
  border-top: 1px solid #1a1a1a;
  background-color: #2b2b2b;
  color: #888;
  font-size: 16px;
  line-height: 22px;
  text-align: center;
}

.lib-scroll {
  flex: none;
  width: 25px;
  border-left: 2px solid #181818;
  background-color: #141414;
}

.lib-scroll i {
  display: block;
  height: 39%;
  background-color: #262626;
}

/* Timeline */
.timeline .tab {
  padding-left: 39px;
  padding-right: 44px;
}

.timeline .tab .swatch {
  margin-right: 17px;
}

.timeline .tab.active {
  padding-left: 16px;
  padding-right: 15px;
}

.timeline .burger {
  margin-left: 17px;
}

.timeline-body {
  display: flex;
  flex: 1;
}

.layers {
  width: 800px;
}

.layers-top {
  display: flex;
  height: 53px;
  padding: 4px 15px 0 16px;
  border-bottom: 1px solid #0c0c0c;
}

.current-time {
  width: 141px;
  color: #3a98c9;
}

.current-time strong {
  display: block;
  font-family: "DejaVu Sans", sans-serif;
  font-size: 20px;
  line-height: 26px;
}

.current-time span {
  display: block;
  line-height: 18px;
}

.layer-search {
  width: 341px;
  height: 31px;
  margin-top: 5px;
  padding-left: 7px;
  background-color: #1f1f1f;
}

.layer-search input {
  flex: 1;
  min-width: 0;
}

.layer-tools {
  display: flex;
  flex: 1;
  align-items: flex-start;
  justify-content: space-between;
  padding: 8px 9px 0 23px;
}

.layer-toggles {
  display: flex;
  gap: 15px;
}

.layer-table {
  width: 100%;
  table-layout: fixed;
  border-collapse: collapse;
}

.c-av {
  width: 103px;
}

.c-label {
  width: 48px;
}

.c-num {
  width: 49px;
}

.c-name {
  width: 195px;
}

.c-switch {
  width: 205px;
}

.c-parent {
  width: 175px;
}

.layer-table th {
  height: 29px;
  padding: 2px 0 0 9px;
  border-bottom: 2px solid #000;
  background: #303030 linear-gradient(#111, #111) no-repeat left center / 1px 16px;
  font-size: 12px;
  font-weight: normal;
  text-align: left;
}

.layer-table th:first-child,
.layer-table td:first-child {
  padding-left: 4px;
  background-image: none;
}

.layer-table td {
  height: 25px;
  background-color: #2c2c2c;
}

.layer-table .num {
  padding-left: 10px;
}

.tag {
  margin-left: 13px;
}

.av {
  display: grid;
  grid-template-columns: repeat(4, 23px);
  align-items: center;
  justify-items: center;
}

.switches {
  display: grid;
  grid-template-columns: repeat(8, 1fr);
  align-items: center;
  justify-items: center;
  width: 180px;
  color: #c0c0c0;
}

.layer-table th .switches {
  margin-left: -4px;
}

.layer-table td .switches {
  margin-left: 5px;
}

.cell {
  width: 20px;
  height: 20px;
  background-color: #171717;
}

.cell.dim {
  color: #777;
}

.label-cell {
  display: flex;
  align-items: center;
  padding-left: 8px;
}

.label-cell .swatch {
  width: 18px;
  height: 18px;
  margin: 0;
}

.label-cell .twirl {
  margin-right: 6px;
}

.layer-name {
  display: flex;
  align-items: center;
  gap: 11px;
  padding-left: 6px;
  font-size: 17px;
  font-weight: bold;
}

.parent {
  display: flex;
  align-items: center;
  gap: 9px;
  padding-left: 7px;
}

.parent-select {
  width: 136px;
  height: 23px;
}

/* Time ruler and tracks */
.time {
  position: relative;
  display: flex;
  flex: 1;
  flex-direction: column;
  min-width: 0;
  padding-top: 7px;
  border-left: 1px solid #0c0c0c;
  border-right: 1px solid #161616;
  overflow: hidden;
}

.navigator,
.work-area {
  display: flex;
}

.bar {
  flex: 1;
  background-color: #696969;
  border: 1px solid #0c0c0c;
  border-width: 1px 0;
}

.work-area .bar {
  background-color: #5f5f5f;
}

.handle {
  width: 10px;
  border-right: 1px solid #0c0c0c;
  border-radius: 8px 0 0 8px;
  background: linear-gradient(90deg, #14506c 2px, transparent 2px 3px, #14506c 3px) no-repeat center / 5px 60%;
  background-color: #3dc8fa;
}

.handle.end {
  border-right: none;
  border-left: 1px solid #0c0c0c;
  border-radius: 0 8px 8px 0;
}

.navigator {
  height: 15px;
}

.ruler {
  display: flex;
  justify-content: space-between;
  height: 30px;
  padding: 2px 11px 0 10px;
}

.ruler span {
  display: flex;
  flex-direction: column;
  align-items: center;
  justify-content: space-between;
  width: 0;
  white-space: nowrap;
  line-height: 18px;
}

.ruler span::after {
  content: "";
  width: 1px;
  height: 8px;
  background-color: #888;
}

.work-area {
  height: 25px;
}

.cache {
  height: 5px;
  padding: 0 11px 0 10px;
}

.cache i {
  display: block;
  height: 4px;
  background-color: #1bb52c;
}

.tracks {
  flex: 1;
  padding: 0 11px 2px 10px;
  border-top: 1px solid #000;
}

.lane {
  height: 100%;
  background-color: #333;
}

.layer-bar {
  height: 25px;
  background-color: #555e90;
  border-bottom: 1px solid #3a3f58;
}

.playhead-area {
  position: absolute;
  top: 29px;
  right: 11px;
  bottom: 0;
  left: 10px;
}

.playhead {
  position: absolute;
  top: 0;
  bottom: 0;
  width: 18px;
  margin-left: -9px;
  background: linear-gradient(#3f94bf, #3f94bf) no-repeat center / 2px 100%;
}

.time-side {
  display: flex;
  flex-direction: column;
  align-items: center;
  width: 25px;
}

.marker {
  margin: 52px 0 7px;
}

.comp-button {
  align-self: flex-start;
  margin-bottom: 3px;
}

.time-side .scrollbar {
  flex: 1;
  width: 100%;
  background-color: #141414;
}

.timeline-foot {
  display: flex;
  height: 25px;
  border-top: 1px solid #000;
}

.foot-left {
  display: flex;
  gap: 8px;
  width: 397px;
  padding-left: 8px;
}

.toggle {
  width: 203px;
  background-color: #1f1f1f;
  color: #c0c0c0;
}

.zoomer {
  display: flex;
  align-items: center;
  gap: 12px;
  width: 361px;
  padding: 0 4px 0 207px;
  border-right: 2px solid #161616;
}

.zoomer input {
  appearance: none;
  flex: 1;
  min-width: 0;
  height: 20px;
  margin-right: 6px;
  background: linear-gradient(#151515, #151515) no-repeat center / 100% 1px;
}

.zoomer input::-webkit-slider-thumb {
  appearance: none;
  width: 15px;
  height: 18px;
  background-color: #8a8a8a;
  clip-path: polygon(50% 0, 100% 30%, 100% 100%, 0 100%, 0 30%);
}

/* Taskbar edge */
.taskbar {
  height: 2px;
  padding-left: 72px;
}

.taskbar i {
  display: block;
  width: 27%;
  height: 2px;
  background-color: #ddd;
}
```
